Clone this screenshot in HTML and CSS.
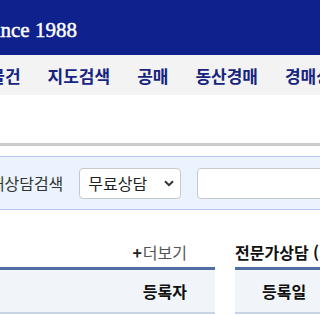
FILE: index.html
```html
<!DOCTYPE html>
<html lang="ko">
<head>
<meta charset="utf-8">
<link rel="stylesheet" href="styles.css">
</head>
<body>
<header class="top">
  <div class="since">Since 1988</div>
</header>
<nav class="gnb">
  <a class="gnb-item">경매물건</a>
  <a class="gnb-item">지도검색</a>
  <a class="gnb-item">공매</a>
  <a class="gnb-item">동산경매</a>
  <a class="gnb-item">경매상담</a>
</nav>
<div class="spacer"></div>
<div class="search-box">
  <span class="search-label">경매상담검색</span>
  <div class="select">
    <span>무료상담</span>
    <svg class="chev" width="10" height="7" viewBox="0 0 10 7"><path d="M1 1.2 L5 5.2 L9 1.2" fill="none" stroke="#333" stroke-width="2"/></svg>
  </div>
  <div class="text-input"></div>
</div>
<div class="boards">
  <section class="board board-left">
    <div class="board-head">
      <span class="more"><b>+</b>더보기</span>
    </div>
    <div class="thead">
      <span class="th">등록자</span>
    </div>
  </section>
  <section class="board board-right">
    <div class="board-head">
      <span class="title">전문가상담 (최근)</span>
    </div>
    <div class="thead">
      <span class="th th-date">등록일</span>
    </div>
  </section>
</div>
</body>
</html>
```
FILE: styles.css
```css
html, body {
  margin: 0;
  padding: 0;
  background: #fff;
  overflow: hidden;
}
body {
  width: 320px;
  height: 315px;
  font-family: "Noto Sans CJK KR", "Noto Sans", sans-serif;
  color: #222;
}
.top {
  height: 55px;
  background: #0f218c;
  display: flex;
  align-items: center;
  overflow: hidden;
}
.since {
  font-family: "Liberation Serif", "Times New Roman", serif;
  font-size: 21px;
  color: #fff;
  margin-left: -17px;
  margin-top: 6px;
  white-space: nowrap;
  -webkit-text-stroke: 0.45px #fff;
}
.gnb {
  height: 40px;
  background: #f3f3f3;
  display: flex;
  align-items: center;
  gap: 27px;
  margin-left: -42px;
  white-space: nowrap;
}
.gnb-item {
  font-size: 17px;
  font-weight: 700;
  color: #16237f;
  line-height: 1;
  flex: none;
}
.spacer {
  height: 48px;
  border-bottom: 3px solid #cccccc;
}
.search-box {
  margin-top: 10px;
  height: 52px;
  background: #eaf3fe;
  border-top: 1px solid #b7c8ee;
  border-bottom: 1px solid #b7c8ee;
  display: flex;
  align-items: center;
  gap: 16px;
  margin-left: -25px;
  white-space: nowrap;
}
.search-label {
  font-size: 16px;
  color: #333;
  flex: none;
}
.select {
  flex: none;
  box-sizing: border-box;
  width: 102px;
  height: 31px;
  background: #fff;
  border: 1px solid #c8c8c8;
  border-radius: 4px;
  display: flex;
  align-items: center;
  justify-content: space-between;
  padding: 0 6px 0 8px;
  font-size: 16px;
  color: #222;
}
.chev {
  display: block;
  margin-top: 1px;
}
.text-input {
  flex: none;
  box-sizing: border-box;
  width: 200px;
  height: 31px;
  background: #fff;
  border: 1px solid #c8c8c8;
  border-radius: 4px;
}
.boards {
  display: flex;
  gap: 20px;
  margin-top: 26px;
  margin-left: -100px;
}
.board-left {
  width: 315px;
  flex: none;
}
.board-right {
  width: 300px;
  flex: none;
}
.board-head {
  height: 31px;
  display: flex;
  align-items: center;
  border-bottom: 3px solid #4f6fa3;
}
.board-left .board-head {
  justify-content: flex-end;
  padding-right: 28px;
}
.more {
  font-size: 16px;
  color: #555;
  line-height: 1;
}
.more b {
  color: #222;
  font-weight: 700;
  margin-right: 1px;
}
.title {
  font-size: 16px;
  font-weight: 700;
  color: #111;
  white-space: nowrap;
}
.thead {
  height: 42px;
  background: #f1f5fa;
  border-bottom: 2px solid #c9d5e6;
  display: flex;
  align-items: center;
}
.board-left .thead {
  justify-content: flex-end;
  padding-right: 28px;
}
.th {
  font-size: 16px;
  font-weight: 700;
  color: #111;
}
.th-date {
  margin-left: 27px;
}
```
